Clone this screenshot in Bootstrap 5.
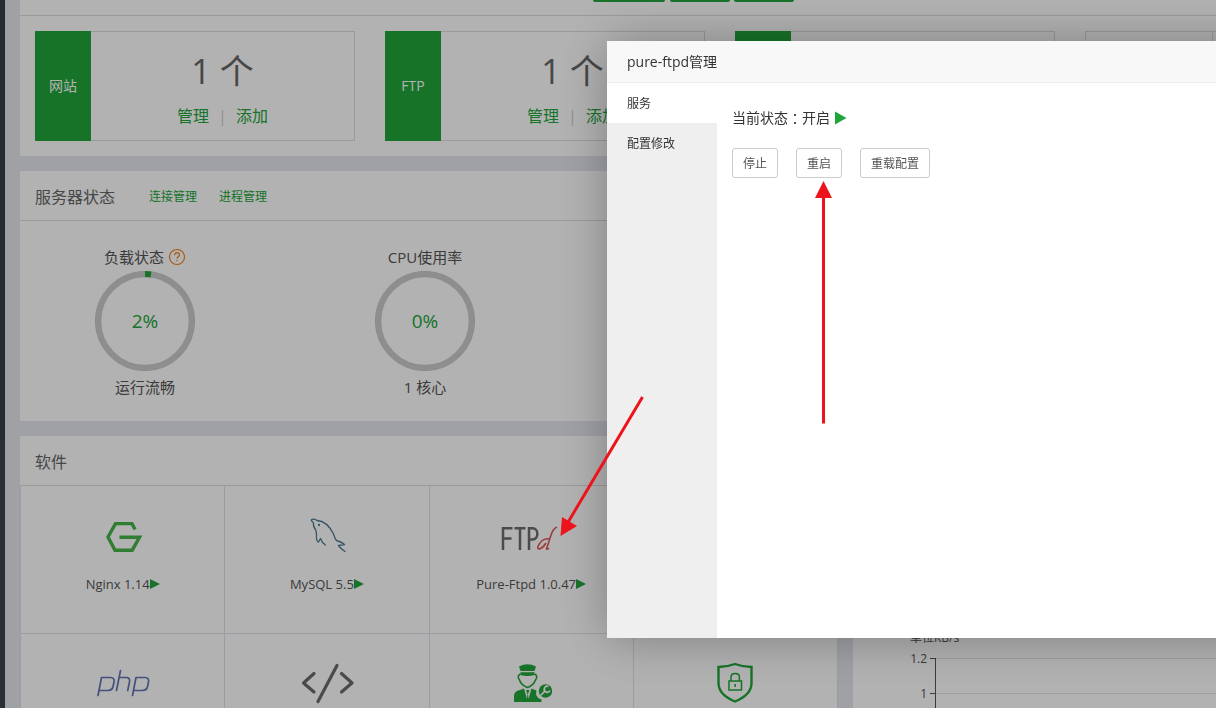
<!DOCTYPE html>
<html lang="zh-CN">
<head>
<meta charset="utf-8">
<meta name="viewport" content="width=device-width, initial-scale=1">
<title>pure-ftpd管理</title>
<link href="https://cdn.jsdelivr.net/npm/bootstrap@5.3.0/dist/css/bootstrap.min.css" rel="stylesheet">
<style>
:root{--green:#20a53a;--line:#ddd}
html,body{height:100%}
body{font-family:"Open Sans","Noto Sans CJK SC",sans-serif;font-size:15px;line-height:20px;color:#555;background:#e5e7ed;overflow:hidden}
a{color:var(--green);text-decoration:none}
.side-strip{flex:0 0 5px;background:#3d444d}
.side-menu{height:440px;background:#353d49}
.main-area{padding:0 0 0 15px;overflow:hidden}
.panel{background:#fff;margin-bottom:15px}
.panel-head{height:50px;padding:2px 15px 0;border-bottom:1px solid var(--line);color:#666;font-size:16px}
.panel-head a{font-size:12px}
.top-bar{height:16px;border-bottom:1px solid var(--line);padding-left:573px}
.top-btn{height:2px;background:var(--green);border:0;padding:0;border-radius:0 0 4px 4px}
.stat-list{padding:15px;gap:30px}
.stat{flex:0 0 320px;height:110px;border:1px solid var(--line)}
.stat-name{flex:0 0 56px;margin:-1px 0 -1px -1px;background:var(--green);color:#fff;font-size:14px}
.stat-body{padding-top:20px}
.stat-num{font-size:34px;line-height:38px;color:#666}
.stat-links{font-size:16px;line-height:20px;gap:8px;margin-top:16px}
.stat-links span{color:#ccc;padding:0 1px}
.gauges{padding:25px 0 24px;gap:30px}
.gauge{flex:0 0 250px}
.gauge-name{height:25px;padding-top:1px}
.gauge-note{padding-top:6px}
.gauge-ring{width:100px;height:100px}
.gauge-ring text{font-size:19px;fill:var(--green)}
.soft-panel{flex:0 0 818px}
.soft-grid{display:grid;grid-template-columns:repeat(4,1fr);border-left:1px solid #e0e0ec}
.soft{height:148px;border:solid #e0e0ec;border-width:0 1px 1px 0;padding-top:25px;font-size:13px;color:#555}
.soft-icon{width:60px;height:50px}
.soft-name{margin-top:13px}
.soft-name svg{vertical-align:-1px}
.net-chart{padding-top:142px;font-size:12px}
.shade{position:fixed;inset:0;background:rgba(0,0,0,.3);padding:41px 0 0 607px;overflow:hidden}
.dialog-box{margin-right:-80px;background:#fff;border-radius:2px;box-shadow:1px 1px 50px rgba(0,0,0,.3);color:#333}
.dialog-title{height:42px;background:#f8f8f8;border-bottom:1px solid #eee;padding:0 20px;font-size:14px}
.dialog-body{height:555px}
.dialog-tabs{flex:0 0 110px;background:#efefef}
.dialog-tabs button{height:40px;padding:2px 20px 0;border:0;background:none;text-align:left;font-size:12px;color:#333}
.dialog-tabs button.active{background:#fff}
.dialog-pane{padding:25px 15px;font-size:14px}
.colon{font-family:"Noto Sans CJK TC",sans-serif}
.ctl{--bs-btn-color:#555;--bs-btn-border-color:#ccc;--bs-btn-font-size:12px;--bs-btn-border-radius:3px;height:30px;padding:2px 10px 0}
.arrows{position:absolute;left:0;top:0;pointer-events:none}
</style>
</head>
<body>
<div class="d-flex h-100">
  <div class="side-strip"><div class="side-menu"></div></div>
  <main class="main-area flex-fill">
    <section class="panel">
      <div class="top-bar d-flex">
        <button class="top-btn" style="width:72px" aria-label="更新"></button>
        <button class="top-btn" style="width:60px;margin-left:5px" aria-label="修复"></button>
        <button class="top-btn" style="width:60px;margin-left:4px" aria-label="重启"></button>
      </div>
      <div class="stat-list d-flex">
        <div class="stat d-flex"><div class="stat-name d-flex align-items-center justify-content-center">网站</div>
          <div class="stat-body flex-fill text-center"><div class="stat-num">1 个</div><div class="stat-links d-flex justify-content-center"><a href="#">管理</a><span>|</span><a href="#">添加</a></div></div></div>
        <div class="stat d-flex"><div class="stat-name d-flex align-items-center justify-content-center">FTP</div>
          <div class="stat-body flex-fill text-center"><div class="stat-num">1 个</div><div class="stat-links d-flex justify-content-center"><a href="#">管理</a><span>|</span><a href="#">添加</a></div></div></div>
        <div class="stat d-flex"><div class="stat-name"></div></div>
        <div class="stat d-flex"><div style="width:127px" class="border-end"></div></div>
      </div>
    </section>
    <section class="panel">
      <div class="panel-head d-flex align-items-center"><span>服务器状态</span><a href="#" style="margin-left:34px">连接管理</a><a href="#" style="margin-left:22px">进程管理</a></div>
      <div class="gauges d-flex">
        <div class="gauge text-center"><div class="gauge-name d-flex justify-content-center align-items-start"><span>负载状态</span>
            <svg class="ms-1" width="18" height="20" viewBox="0 -1 18 20" fill="none" stroke="#f08216" stroke-width="1.200"><circle cx="9" cy="9" r="7.500"/><path d="M6.600 7.200q0-2.500 2.400-2.500t2.400 2.200c0 1.800-2.400 1.800-2.400 3.900M9 12v1.300"/></svg></div>
          <svg class="gauge-ring d-block mx-auto" viewBox="0 0 100 100"><circle cx="50" cy="50" r="49.500" fill="none" stroke="#a5bfa9"/><circle cx="50" cy="50" r="46.700" fill="none" stroke="#ccc" stroke-width="6"/><path d="M50 3q3 0 6 .4" fill="none" stroke="#20a53a" stroke-width="6"/><text x="50" y="57" text-anchor="middle">2%</text></svg>
          <div class="gauge-note">运行流畅</div></div>
        <div class="gauge text-center"><div class="gauge-name">CPU使用率</div>
          <svg class="gauge-ring d-block mx-auto" viewBox="0 0 100 100"><circle cx="50" cy="50" r="49.500" fill="none" stroke="#a5bfa9"/><circle cx="50" cy="50" r="46.700" fill="none" stroke="#ccc" stroke-width="6"/><text x="50" y="57" text-anchor="middle">0%</text></svg>
          <div class="gauge-note">1 核心</div></div>
      </div>
    </section>
    <div class="d-flex">
      <section class="panel soft-panel">
        <div class="panel-head d-flex align-items-center">软件</div>
        <div class="soft-grid">
          <div class="soft text-center"><svg class="soft-icon" viewBox="0 0 60 50" fill="none" stroke="#46b549" stroke-width="3.400"><path d="M42 18.500 39 12.600H22.500L15 26l7 13.200h17.200L46.500 26.300H26.500"/></svg>
            <div class="soft-name">Nginx 1.14<svg width="10" height="12" viewBox="0 0 10 12"><path d="M0 1l10 5-10 5z" fill="#20a53a"/></svg></div></div>
          <div class="soft text-center"><svg class="soft-icon" viewBox="0 0 60 50" fill="none" stroke="#4c7c94" stroke-width="1.300" stroke-linecap="round" stroke-linejoin="round"><path d="M16.500 12Q13.500 9 14.500 8.600 17 7.500 20 9.500C29 10 34 18 36.500 23Q38 28 39.500 29.500 45 31 47.500 33.500L41.500 34.500Q42 36 48 40.500M16.500 12Q16 16 18.500 18.500 19.500 20.500 19.500 24C19 27 20 31 21.500 31L23.500 27.500Q25 32 28.500 34"/><circle cx="22" cy="14" r=".5"/></svg>
            <div class="soft-name">MySQL 5.5<svg width="10" height="12" viewBox="0 0 10 12"><path d="M0 1l10 5-10 5z" fill="#20a53a"/></svg></div></div>
          <div class="soft text-center"><svg class="soft-icon" viewBox="4 0 60 50" fill="none" stroke="#6c6c6c" stroke-width="2.500"><path d="M6 39V17.200h9.500M6 27.500h8.500M17.500 17.200h11M23 17v22M32 39V17.200h3.500c6.500 0 6.500 11.200 0 11.200H32"/><path d="M60 16q-4 1-7 11-2 7-3.500 10.500.5 1.500 2.500-.5M52 28c-5-1-9 3-11 7.500-1.500 4 4 3 8-3.500" stroke="#e05555" stroke-width="1.600"/></svg>
            <div class="soft-name">Pure-Ftpd 1.0.47<svg width="10" height="12" viewBox="0 0 10 12"><path d="M0 1l10 5-10 5z" fill="#20a53a"/></svg></div></div>
          <div class="soft"></div>
          <div class="soft text-center"><svg class="soft-icon" viewBox="0 0 60 50" fill="none" stroke="#6474b4" stroke-width="1.700" stroke-linecap="round" stroke-linejoin="round"><path d="M5 36.500 8.500 18.500h9c3 0 4 2 3.500 4.500l-.8 4c-.6 3-2.400 4.500-5.200 4.500H6M27.500 11.500l-4 20M26 18.500h7c3 0 4 1.500 3.500 4.500l-1.800 8.500M39.500 36.500l3.500-18h9c3 0 4 2 3.500 4.500l-.8 4c-.6 3-2.400 4.500-5.200 4.500h-9"/></svg></div>
          <div class="soft text-center"><svg class="soft-icon" viewBox="0 0 60 50" fill="none" stroke="#6b6b6b" stroke-width="3.200" stroke-linecap="round" stroke-linejoin="round"><path d="M17 14.500 6.500 24 17 33M40 6.500 21 42.500M44.500 14.500 55 24 44.500 33"/></svg></div>
          <div class="soft text-center"><svg class="soft-icon" viewBox="0 0 60 50" fill="#20a53a"><path d="M18 7.500q8.500-4.500 17 0L33.500 12h-14zM19.500 13.200h14V16q-7 2-14 0z"/><path d="M19.500 15q-4 2-1 6 1.500 5 8 7.500 6-2 8-7.500 3-4-1-6" fill="none" stroke="#20a53a" stroke-width="1.600"/><path d="M13 43v-6q0-5 6-6l4-1.500L26 40l.5-5-1.500-4h3.500L27 35l.5 5 3-10.500 5 2q-2 7 5 9V43z"/><circle cx="44.500" cy="32" r="6.700"/><path d="m39.500 36.500 4.500-4.500" stroke="#fff" stroke-width="1.700"/><path d="M47.500 27.500a3 3 0 1 0 1.500 4" fill="none" stroke="#fff" stroke-width="1.700"/></svg></div>
          <div class="soft text-center"><svg class="soft-icon" viewBox="0 0 60 50" fill="none" stroke="#20a53a"><path d="M30 5q8 3 16.500 3v16c0 10-8 15-16.500 18.500C21.500 39 13.500 34 13.500 24V8Q22 8 30 5z" stroke-width="2.400"/><path d="M24 22h12.500v9H24zM26 22v-4q0-3.500 4.200-3.500t4.200 3.500v4M30.200 25v3" stroke-width="1.500"/></svg></div>
        </div>
      </section>
      <section class="panel flex-fill" style="margin-left:15px">
        <div class="panel-head"></div>
        <div class="net-chart"><svg class="w-100 d-block" height="110"><g fill="#555"><text x="57" y="14">单位KB/s</text><text x="74" y="35" text-anchor="end">1.2</text><text x="74" y="70" text-anchor="end">1</text></g><path d="M83 30.500h400M83 65.500h400" stroke="#e4e4e4"/><path d="M82.500 30v80M77 30.500h6M77 65.500h6" stroke="#555"/></svg></div>
      </section>
    </div>
  </main>
</div>
<div class="shade">
  <div class="dialog-box" role="dialog" aria-labelledby="dialog-title">
    <div class="dialog-title d-flex align-items-center" id="dialog-title">pure-ftpd管理</div>
    <div class="dialog-body d-flex">
      <div class="dialog-tabs d-flex flex-column"><button class="active">服务</button><button>配置修改</button></div>
      <div class="dialog-pane flex-fill">
        <div class="d-flex align-items-center mb-3 pb-1">当前状态<span class="colon">：</span>开启<svg style="margin-left:5px" width="12" height="14" viewBox="0 0 12 14"><path d="M0 .5l11.500 6.500-11.500 6.500z" fill="#20a53a"/></svg></div>
        <div class="d-flex" style="gap:18px"><button class="btn ctl">停止</button><button class="btn ctl">重启</button><button class="btn ctl">重载配置</button></div>
      </div>
    </div>
  </div>
  <svg class="arrows" width="900" height="560" viewBox="0 0 900 560" fill="#ec131c" stroke="#ec131c"><path d="M642.500 397 567 524M823.500 423.500V196" fill="none" stroke-width="3"/><path d="M560.500 536l1.500-19 15 9zM823.500 181l-8.500 17h17z" stroke="none"/></svg>
</div>
<script src="https://cdn.jsdelivr.net/npm/bootstrap@5.3.0/dist/js/bootstrap.bundle.min.js"></script>
</body>
</html>
